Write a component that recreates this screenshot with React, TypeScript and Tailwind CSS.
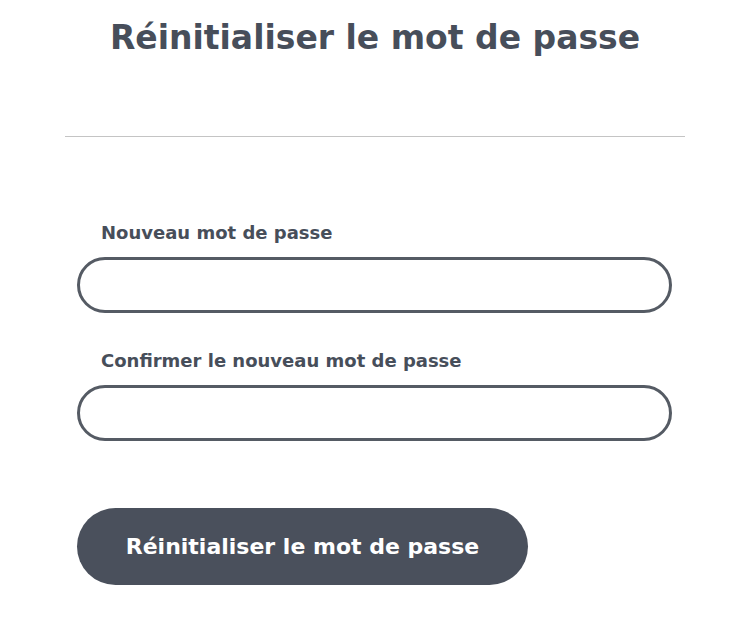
import React from "react";

const ResetPasswordPage: React.FC = () => {
  return (
    <div className="min-h-screen bg-white font-['DejaVu_Sans',sans-serif] text-[#474e5a]">
      <div className="mx-auto w-[620px] translate-x-[5px]">
        <h1 className="pt-[14px] text-center text-[33px] font-bold leading-[48px]">
          Réinitialiser le mot de passe
        </h1>
        <hr className="mt-[74px] border-t border-[#c4c4c4]" />

        <form className="mt-[84px] px-3">
          <label className="block pl-6 text-[18px] font-bold leading-6">
            Nouveau mot de passe
          </label>
          <input
            type="password"
            className="mt-[12px] block h-[56px] w-[595px] rounded-full border-[3px] border-[#555b64] px-6 outline-none"
          />

          <label className="mt-[36px] block pl-6 text-[18px] font-bold leading-6">
            Confirmer le nouveau mot de passe
          </label>
          <input
            type="password"
            className="mt-[12px] block h-[56px] w-[595px] rounded-full border-[3px] border-[#555b64] px-6 outline-none"
          />

          <button
            type="submit"
            className="mt-[67px] h-[77px] w-[451px] rounded-full bg-[#4a505c] text-[22px] font-bold text-white"
          >
            Réinitialiser le mot de passe
          </button>
        </form>
      </div>
    </div>
  );
};

export default ResetPasswordPage;
